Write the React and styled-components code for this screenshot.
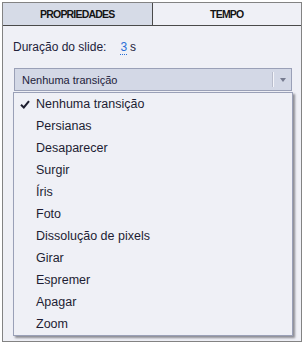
import React from 'react';
import styled, { createGlobalStyle } from 'styled-components';

const GlobalStyle = createGlobalStyle`
  html, body {
    margin: 0;
    padding: 0;
    background: #ffffff;
  }
  body {
    font-family: 'Liberation Sans', Arial, sans-serif;
  }
`;

const Page = styled.div`
  padding: 2px;
  width: 304px;
  height: 344px;
  box-sizing: border-box;
`;

const Frame = styled.div`
  width: 300px;
  height: 340px;
  box-sizing: border-box;
  border: 1px solid #838383;
  background: #eff0f6;
  display: flex;
  flex-direction: column;
`;

const TabBar = styled.div`
  display: flex;
  height: 22px;
  border-bottom: 1px solid #4a4a4a;
`;

const Tab = styled.div`
  flex: 1;
  display: flex;
  align-items: center;
  justify-content: center;
  font-size: 10.5px;
  font-weight: 700;
  letter-spacing: -0.8px;
  color: #141414;
  background: ${(props) => (props.active ? '#d6dbe7' : '#eff0f6')};
  &:not(:last-child) {
    border-right: 1px solid #4a4a4a;
  }
`;

const Content = styled.div`
  padding: 14px 9px 0 10px;
`;

const FieldRow = styled.div`
  display: flex;
  align-items: baseline;
  font-size: 12px;
  line-height: 14px;
  color: #22223a;
`;

const Value = styled.span`
  margin-left: 14px;
  color: #2a6fd6;
  border-bottom: 1px dotted #2a6fd6;
  line-height: 13px;
`;

const Unit = styled.span`
  margin-left: 3px;
`;

const SelectWrap = styled.div`
  position: relative;
  margin: 13px 0 0 1px;
`;

const Select = styled.div`
  height: 23px;
  box-sizing: border-box;
  border: 1px solid #9aa0b7;
  background: #d3d8e6;
  display: flex;
  align-items: center;
  padding-left: 7px;
  font-size: 11px;
  color: #22223a;
`;

const SelectText = styled.span`
  flex: 1;
`;

const Divider = styled.span`
  width: 1px;
  height: 15px;
  background: #b9bdcc;
  border-right: 1px solid #f4f5fa;
  margin-right: 6px;
`;

const Arrow = styled.span`
  width: 0;
  height: 0;
  border-left: 3.5px solid transparent;
  border-right: 3.5px solid transparent;
  border-top: 4px solid #767b90;
  margin-right: 5px;
`;

const Menu = styled.ul`
  position: absolute;
  top: 24px;
  left: -1px;
  width: 280px;
  box-sizing: border-box;
  margin: 0;
  padding: 0;
  list-style: none;
  background: #eff0f6;
  border: 1px solid #9aa0b7;
  box-shadow: 2px 2px 2px rgba(60, 60, 70, 0.55);
`;

const Item = styled.li`
  height: 22px;
  display: flex;
  align-items: center;
  font-size: 12.5px;
  color: #1d1d33;
`;

const CheckSlot = styled.span`
  width: 22px;
  display: flex;
  justify-content: center;
`;

const Check = () => (
  <svg width="10" height="9" viewBox="0 0 10 9">
    <path d="M1 4.8 L3.8 7.5 L9 1.2" fill="none" stroke="#1d1d2e" strokeWidth="2" />
  </svg>
);

const options = [
  'Nenhuma transição',
  'Persianas',
  'Desaparecer',
  'Surgir',
  'Íris',
  'Foto',
  'Dissolução de pixels',
  'Girar',
  'Espremer',
  'Apagar',
  'Zoom',
];

const App = () => {
  const selected = options[0];
  return (
    <Page>
      <GlobalStyle />
      <Frame>
        <TabBar>
          <Tab active>PROPRIEDADES</Tab>
          <Tab>TEMPO</Tab>
        </TabBar>
        <Content>
          <FieldRow>
            Duração do slide:
            <Value>3</Value>
            <Unit>s</Unit>
          </FieldRow>
          <SelectWrap>
            <Select>
              <SelectText>{selected}</SelectText>
              <Divider />
              <Arrow />
            </Select>
            <Menu>
              {options.map((o) => (
                <Item key={o}>
                  <CheckSlot>{o === selected && <Check />}</CheckSlot>
                  {o}
                </Item>
              ))}
            </Menu>
          </SelectWrap>
        </Content>
      </Frame>
    </Page>
  );
};

export default App;
